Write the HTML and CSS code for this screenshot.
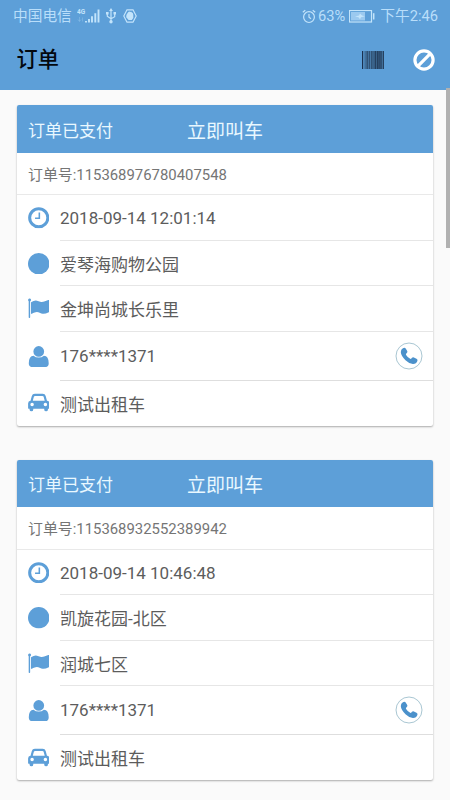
FILE: index.html
```html
<!DOCTYPE html>
<html lang="zh-CN">
<head>
<meta charset="utf-8">
<meta name="viewport" content="width=device-width, initial-scale=1">
<title>订单</title>
<link rel="stylesheet" href="styles.css">
</head>
<body>
<svg class="defs" width="0" height="0">
  <symbol id="clock" viewBox="0 0 22 22"><circle cx="11" cy="11" r="9.300" fill="none" stroke="currentColor" stroke-width="3.100"/><path d="M11.600 5.500v6.100H7.200" fill="none" stroke="currentColor" stroke-width="1.600"/></symbol>
  <symbol id="dot" viewBox="0 0 22 22"><circle cx="11" cy="11" r="11" fill="currentColor"/></symbol>
  <symbol id="flag" viewBox="0 0 22 22"><path fill="currentColor" d="M.1 2a1.500 1.500 0 1 1 2.100 1.400v16.400q0 .6-.6.600h-.3q-.6 0-.6-.6V3.300Q.1 2.900.1 2zM3.100 4.400Q6.400 2.100 9.200 2.700q1.500.3 3.400 1.200 1.800.7 4-.2l4.200-1.600q1.100-.4 1.100.5v11q0 .6-.6.900-3.800 1.900-6.300 1.600-1.100-.1-3.100-1.100-2-1-4.100-.5-1.700.4-3.900 1.700-.8.400-.8-.5z"/></symbol>
  <symbol id="user" viewBox="0 0 22 22"><path fill="currentColor" d="M11 .1a5.500 5.500 0 1 1 0 11 5.500 5.500 0 0 1 0-11zM5.700 9.900q2.200 1.900 5.300 1.900t5.300-1.900q4.900.3 4.900 7.700 0 4-3.700 4h-13q-3.700 0-3.700-4 0-7.400 4.900-7.700z"/></symbol>
  <symbol id="car" viewBox="0 0 22 22"><path fill="currentColor" fill-rule="evenodd" d="M7 1.800h8q2.500 0 3.100 2.300l1.300 4.900q2.500.2 2.500 2.700v4.900q0 .5-.5.500h-1v.8a1.900 1.900 0 0 1-3.800 0v-.8H5.400v.8a1.900 1.900 0 0 1-3.800 0v-.8h-1q-.5 0-.5-.5v-4.900Q.1 9.200 2.600 9l1.300-4.900Q4.500 1.800 7 1.800zM7.300 4.100q-1.100 0-1.300.8L4.900 9h12.200L16 4.900q-.2-.8-1.300-.8zM4.200 11a1.800 1.800 0 1 0 0 3.600 1.800 1.800 0 0 0 0-3.600zm13.600 0a1.800 1.800 0 1 0 0 3.600 1.800 1.800 0 0 0 0-3.600z"/></symbol>
  <symbol id="call" viewBox="0 0 28 28"><circle cx="14" cy="14" r="13" fill="#fff" stroke="#9fbfcd" stroke-width=".9"/><path fill="#4b91cb" d="M7.900 6.300q1.900-1 2.800.3l1.500 2.400q.7 1.200-.4 2l-.7.700q-.4.500 0 1.200 1.500 2.500 4.100 3.900.7.300 1.200-.2l.6-.8q.8-1 1.900-.4l2.600 1.400q1.500.8.900 2.300-1.100 3-4.500 2.900-3.700-.2-7.400-3.800Q6 13.800 5.800 10q0-2.700 2.100-3.700z"/></symbol>
</svg>

<header class="top">
  <div class="status">
    <span class="carrier">中国电信</span>
    <svg class="signal" width="24" height="17" viewBox="0 0 24 17"><text x="0" y="6" class="net">4G</text><path class="faint" d="M2.500 9v4M1 11.500l1.500 2 1.500-2M5.500 13.500v-4"/><path d="M9 13v1.500M12 11v3.500M15 8.300v6.200M18.300 5.200v9.300M21.500 1.500v13" stroke-width="1.900"/></svg>
    <svg class="usb" width="10" height="16" viewBox="0 0 10 16"><path d="M5 2v11M1.300 5v3.200L5 10.700l3.700-2V5.500"/><path class="solid" d="M5 0l1.900 3H3.100zM0 4h2.600v2.600H0zM7.500 4H10v2.500H7.500z"/><circle class="solid" cx="5" cy="13.700" r="1.700"/></svg>
    <svg class="hand" width="14" height="14" viewBox="0 0 14 14"><path d="M4 .8h6L13.200 7 10 13.200H4L.8 7z"/><path class="solid" d="M3.400 6l1.200-2 .8-.9.900-.6.800.4 1-.1.800.8.900.4.500 1.900v3.200L8.800 11H5.600L3.200 8.200z"/></svg>
    <span class="space"></span>
    <svg class="alarm" width="14" height="15" viewBox="0 0 14 15"><circle cx="7" cy="8.100" r="5.400"/><path d="M7 5v3.300l2 1.500M.8 3.200l2.500-2M13.200 3.200l-2.500-2"/></svg>
    <span class="percent">63%</span>
    <svg class="battery" width="26" height="13" viewBox="0 0 26 13"><rect x=".5" y=".5" width="22" height="11.500"/><rect class="charge" x="2" y="2" width="14" height="8.500"/><path class="solid" d="M6 6.500l4-1 1-2 2 2 3 .7-4 1-1 2-1.500-2z"/><path d="M24.700 3.200v6.300" stroke-width="1.500"/></svg>
    <span class="time">下午2:46</span>
  </div>
  <div class="bar">
    <h1>订单</h1>
    <svg class="barcode" width="22" height="18" viewBox="0 0 22 18"><path fill="#2f5174" d="M0 0h1.300v18H0zM2.600 0h1v18h-1zM4.500 0h1.700v18H4.500zM7 0h1v18H7zM9 0h1.600v18H9zM11.400 0h1v18h-1z"/><path fill="#172a46" d="M0 0h.8v18H0zM12.700 0h1.700v18h-1.700zM15 0h1.700v18H15zM17.200 0h1.500v18h-1.500zM19.300 0h.8v18h-.8zM20.900 0H22v18h-1.100z"/><path fill="#345678" opacity=".5" d="M4 0h18v18H4z"/></svg>
    <svg class="ban" width="22" height="22" viewBox="0 0 22 22"><path fill="none" stroke="#fff" stroke-width="3.200" d="M11 1.900a9.100 9.100 0 1 1 0 18.200 9.100 9.100 0 0 1 0-18.200zM4.700 17.300L17.300 4.700"/></svg>
  </div>
</header>
<div class="scrollbar"></div>

<main class="orders">
  <section class="card">
    <div class="card-head"><span class="state">订单已支付</span><span class="hail">立即叫车</span></div>
    <div class="number">订单号:115368976780407548</div>
    <div class="row date"><svg class="icon"><use href="#clock"/></svg><div class="cell">2018-09-14 12:01:14</div></div>
    <div class="row"><svg class="icon"><use href="#dot"/></svg><div class="cell">爱琴海购物公园</div></div>
    <div class="row"><svg class="icon"><use href="#flag"/></svg><div class="cell">金坤尚城长乐里</div></div>
    <div class="row tall"><svg class="icon"><use href="#user"/></svg><div class="cell">176****1371<svg class="call"><use href="#call"/></svg></div></div>
    <div class="row last"><svg class="icon"><use href="#car"/></svg><div class="cell">测试出租车</div></div>
  </section>
  <section class="card">
    <div class="card-head"><span class="state">订单已支付</span><span class="hail">立即叫车</span></div>
    <div class="number">订单号:115368932552389942</div>
    <div class="row date"><svg class="icon"><use href="#clock"/></svg><div class="cell">2018-09-14 10:46:48</div></div>
    <div class="row"><svg class="icon"><use href="#dot"/></svg><div class="cell">凯旋花园-北区</div></div>
    <div class="row"><svg class="icon"><use href="#flag"/></svg><div class="cell">润城七区</div></div>
    <div class="row tall"><svg class="icon"><use href="#user"/></svg><div class="cell">176****1371<svg class="call"><use href="#call"/></svg></div></div>
    <div class="row last"><svg class="icon"><use href="#car"/></svg><div class="cell">测试出租车</div></div>
  </section>
</main>
</body>
</html>
```
FILE: styles.css
```css
* { box-sizing: border-box; }

body {
  margin: 0;
  height: 800px;
  overflow: hidden;
  background: #fafafa;
  color: #5c5c5c;
  font-family: Roboto, "Noto Sans CJK SC", sans-serif;
  font-size: 17px;
}

svg { display: block; flex: none; }
.defs { position: absolute; }

.top { height: 89.500px; background: #5d9fd8; }

.status {
  display: flex;
  align-items: center;
  height: 31px;
  padding: 1px 12px 0 13px;
  color: #b9defa;
  font-size: 14.700px;
  line-height: 30px;
  white-space: nowrap;
}
.status svg { fill: none; stroke: #c3e4fb; stroke-width: 1.200; }
.status .solid { fill: #c3e4fb; stroke: none; }
.status .faint { opacity: .3; stroke-width: .8; }
.status .charge { fill: #9bc9ef; stroke: none; }
.net { font: bold 6.500px Roboto, sans-serif; fill: #c3e4fb; stroke: none; }
.signal { margin-left: 5px; }
.usb { margin-left: 5px; }
.hand { margin-left: 7px; }
.space { flex: 1; }
.percent { margin-left: 2px; }
.battery { margin-left: 4px; }
.time { margin-left: 5px; }

.bar {
  display: flex;
  align-items: center;
  height: 57px;
  padding: 0 15px 0 16.500px;
}
h1 {
  flex: 1;
  margin: 0;
  color: #03080f;
  font-size: 21.200px;
  font-weight: 500;
  line-height: 30px;
}
.ban { margin-left: 29px; }

.scrollbar {
  position: absolute;
  top: 88px;
  right: 0;
  width: 4px;
  height: 160px;
  background: #b1b1b1;
}

.orders {
  display: flex;
  flex-direction: column;
  gap: 34px;
  padding: 15.500px 17px;
}

.card {
  flex: none;
  border-radius: 2px;
  background: #fff;
  box-shadow: 0 1px 2px rgba(0, 0, 0, .32);
}
.card-head {
  display: grid;
  grid-template-columns: 1fr auto 1fr;
  align-items: center;
  height: 47.500px;
  padding: 1px 11px 0;
  border-radius: 2px 2px 0 0;
  background: #5d9fd8;
  color: #e9f8ff;
}
.hail { font-size: 19px; }
.number {
  height: 42.900px;
  padding-left: 11px;
  border-bottom: 1px solid #e9e9e9;
  color: #757575;
  font-size: 14.900px;
  line-height: 44.500px;
}
.row { display: flex; align-items: center; height: 45.500px; padding-left: 10.500px; }
.icon { width: 21.500px; height: 21.500px; color: #5d9fd8; }
.cell {
  display: flex;
  flex: 1;
  align-items: center;
  justify-content: space-between;
  height: 100%;
  margin-left: 11px;
  padding-right: 10px;
  border-bottom: 1px solid #e6e6e6;
}
.date .cell { padding-top: 1px; }
.tall { height: 49px; }
.tall .cell { border-color: #dedede; }
.last { height: 44.700px; }
.last .cell { border: 0; }
.call { width: 28px; height: 28px; }
```
